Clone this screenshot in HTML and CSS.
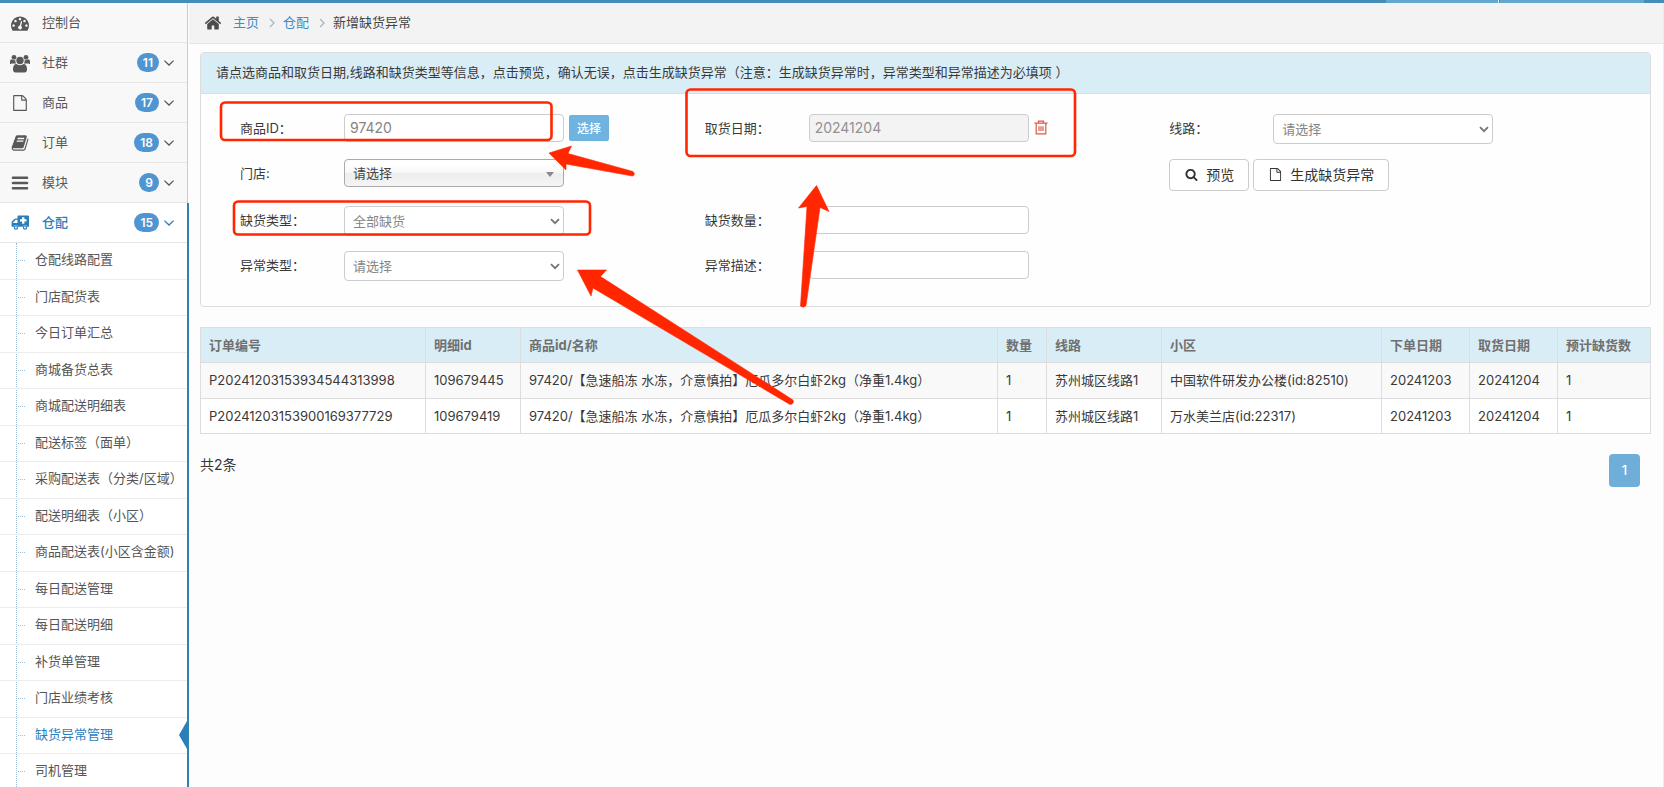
FILE: index.html
```html
<!DOCTYPE html>
<html lang="zh-CN">
<head>
<meta charset="utf-8">
<title>新增缺货异常</title>
<link rel="stylesheet" href="styles.css">
</head>
<body>
<svg class="sprite" aria-hidden="true">
  <symbol id="i-down" viewBox="0 0 10 6"><path d="M.4.6L5 5 9.600.6" fill="none" stroke="currentColor" stroke-width="1.300"/></symbol>
  <symbol id="i-right" viewBox="0 0 6 10"><path d="M1 1l4 4-4 4" fill="none" stroke="currentColor" stroke-width="1.4"/></symbol>
  <symbol id="i-select" viewBox="0 0 10 7"><path d="M1 1.2l4 4 4-4" fill="none" stroke="currentColor" stroke-width="1.9"/></symbol>
  <symbol id="i-file" viewBox="0 0 1792 1792"><path d="M1596 380q28 28 48 76t20 88v1152q0 40-28 68t-68 28h-1344q-40 0-68-28t-28-68v-1600q0-40 28-68t68-28h896q40 0 88 20t76 48zm-444-244v376h376q-10-29-22-41l-313-313q-12-12-41-22zm384 1528v-1024h-416q-40 0-68-28t-28-68v-416h-768v1536h1280z"/></symbol>
</svg>
<div class="app">
  <header class="topbar"><span class="topbar-item"></span><span class="topbar-item topbar-item-wide"></span></header>
  <div class="layout">
    <nav class="sidebar">
      <ul class="menu">
        <li><a class="menu-link" href="#">
          <svg class="menu-icon" viewBox="0 0 1792 1792"><path d="M384 1152q0-53-37.5-90.5t-90.5-37.5-90.5 37.5-37.5 90.5 37.5 90.5 90.5 37.5 90.5-37.5 37.5-90.5zm192-448q0-53-37.5-90.5t-90.5-37.5-90.5 37.5-37.5 90.5 37.5 90.5 90.5 37.5 90.5-37.5 37.5-90.5zm428 481l101-382q6-26-7.5-48.5t-38.5-29.5-48 6.5-30 39.5l-101 382q-60 5-107 43.5t-63 98.5q-20 77 20 146t117 89 146-20 89-117q16-60-6-117t-72-91zm660-33q0-53-37.5-90.5t-90.5-37.5-90.5 37.5-37.5 90.5 37.5 90.5 90.5 37.5 90.5-37.5 37.5-90.5zm-640-640q0-53-37.5-90.5t-90.5-37.5-90.5 37.5-37.5 90.5 37.5 90.5 90.5 37.5 90.5-37.5 37.5-90.5zm448 192q0-53-37.5-90.5t-90.5-37.5-90.5 37.5-37.5 90.5 37.5 90.5 90.5 37.5 90.5-37.5 37.5-90.5zm320 448q0 261-141 483-19 29-54 29h-1402q-35 0-54-29-141-221-141-483 0-182 71-348t191-286 286-191 348-71 348 71 286 191 191 286 71 348z"/></svg>
          <span class="menu-text">控制台</span></a></li>
        <li><a class="menu-link" href="#">
          <svg class="menu-icon" viewBox="1 0 18 18"><circle cx="4" cy="3.3" r="2.4"/><circle cx="16" cy="3.3" r="2.4"/><path d="M0 9.500V7.500Q0 5.200 2 5.200Q4 6.700 5.300 5.800Q5 8 6.200 9.500H1.500Q0 10.500 0 9.500zM20 9.500V7.500Q20 5.200 18 5.200Q16 6.700 14.700 5.800Q15 8 13.800 9.500H18.500Q20 10.500 20 9.500z"/><circle cx="10" cy="6.500" r="3.700"/><path d="M3 15.500Q3 10 6.500 10Q10 12.400 13.500 10Q17 10 17 15.500Q17 18.500 14.500 18.500H5.500Q3 18.500 3 15.500z"/></svg>
          <span class="menu-text">社群</span><span class="badge">11</span><svg class="chevron"><use href="#i-down"/></svg></a></li>
        <li><a class="menu-link" href="#">
          <svg class="menu-icon menu-icon-small"><use href="#i-file"/></svg>
          <span class="menu-text">商品</span><span class="badge">17</span><svg class="chevron"><use href="#i-down"/></svg></a></li>
        <li><a class="menu-link" href="#">
          <svg class="menu-icon" viewBox="0 0 1792 1792"><path d="M1703 478q40 57 18 129l-275 906q-19 64-76.500 107.500t-122.500 43.500h-923q-77 0-148.500-53.500t-99.500-131.500q-24-67-2-127 0-4 3-27t4-37q1-8-3-21.500t-3-19.500q2-11 8-21t16.500-23.500 16.500-23.500q23-38 45-91.500t30-91.500q3-10 .5-30t-.5-28q3-11 17-28t17-23q21-36 42-92t25-90q1-9-2.500-32t.5-28q4-13 22-30.500t22-22.500q19-26 42.500-84.500t27.500-96.500q1-8-3-25.500t-2-26.500q2-8 9-18t18-23 17-21q8-12 16.500-30.500t15-35 16-36 19.500-32 26.500-23.500 36-11.500 47.500 5.500l-1 3q38-9 51-9h761q74 0 114 56t18 130l-274 906q-36 119-71.500 153.500t-128.500 34.500h-869q-27 0-38 15-11 16-1 43 24 70 144 70h923q29 0 56-15.500t35-41.500l300-987q7-22 5-57 38 15 59 43zm-1064 2q-4 13 2 22.500t20 9.500h608q13 0 25.500-9.500t16.500-22.500l21-64q4-13-2-22.500t-20-9.500h-608q-13 0-25.500 9.500t-16.500 22.500zm-83 256q-4 13 2 22.500t20 9.500h608q13 0 25.500-9.500t16.500-22.500l21-64q4-13-2-22.500t-20-9.500h-608q-13 0-25.500 9.500t-16.500 22.500z"/></svg>
          <span class="menu-text">订单</span><span class="badge">18</span><svg class="chevron"><use href="#i-down"/></svg></a></li>
        <li><a class="menu-link" href="#">
          <svg class="menu-icon" viewBox="0 0 18 18"><path d="M2 2.500h14a1 1 0 0 1 0 2.600H2a1 1 0 0 1 0-2.600zM2 7.700h14a1 1 0 0 1 0 2.600H2a1 1 0 0 1 0-2.600zM2 12.900h14a1 1 0 0 1 0 2.600H2a1 1 0 0 1 0-2.600z"/></svg>
          <span class="menu-text">模块</span><span class="badge">9</span><svg class="chevron"><use href="#i-down"/></svg></a></li>
        <li class="menu-open"><a class="menu-link" href="#">
          <svg class="menu-icon" viewBox="0 0 18 18"><path fill-rule="evenodd" d="M7.500 1.500H17q1 0 1 1v10.200h-1.600a2.500 2.500 0 0 0-4.800 0H7.300a2.500 2.500 0 0 0-4.800 0H0.600V8.400q0-.7.500-1.200L3.400 4.900Q4 4.400 4.700 4.400H6.500V2.500q0-1 1-1zM11.100 3.200v2.100H9v2.300h2.100v2.100h2.300V7.600h2.100V5.300h-2.100V3.200zM4.700 5.800L2.100 8.400V9h4.400V5.800z"/><path fill-rule="evenodd" d="M4.900 11.300a2.200 2.200 0 1 1 0 4.400 2.200 2.200 0 0 1 0-4.400zm0 1.200a1 1 0 1 0 0 2 1 1 0 0 0 0-2zM14 11.300a2.200 2.200 0 1 1 0 4.400 2.200 2.200 0 0 1 0-4.400zm0 1.200a1 1 0 1 0 0 2 1 1 0 0 0 0-2z"/></svg>
          <span class="menu-text">仓配</span><span class="badge">15</span><svg class="chevron"><use href="#i-down"/></svg></a>
          <ul class="submenu">
            <li><a href="#">仓配线路配置</a></li>
            <li><a href="#">门店配货表</a></li>
            <li><a href="#">今日订单汇总</a></li>
            <li><a href="#">商城备货总表</a></li>
            <li><a href="#">商城配送明细表</a></li>
            <li><a href="#">配送标签（面单）</a></li>
            <li><a href="#">采购配送表（分类/区域）</a></li>
            <li><a href="#">配送明细表（小区）</a></li>
            <li><a href="#">商品配送表(小区含金额)</a></li>
            <li><a href="#">每日配送管理</a></li>
            <li><a href="#">每日配送明细</a></li>
            <li><a href="#">补货单管理</a></li>
            <li><a href="#">门店业绩考核</a></li>
            <li class="current"><a href="#">缺货异常管理</a></li>
            <li><a href="#">司机管理</a></li>
          </ul>
        </li>
      </ul>
    </nav>
    <main class="main">
      <nav class="breadcrumbs">
        <svg class="home-icon" viewBox="0 0 1792 1792"><path d="M1472 992v480q0 26-19 45t-45 19h-384v-384h-256v384h-384q-26 0-45-19t-19-45v-480q0-1 .5-3t.5-3l575-474 575 474q1 2 1 6zm223-69l-62 74q-8 9-21 11h-3q-13 0-21-7l-692-577-692 577q-12 8-24 7-13-2-21-11l-62-74q-8-10-7-23.500t11-21.500l719-599q32-26 76-26t76 26l244 204v-195q0-14 9-23t23-9h192q14 0 23 9t9 23v408l219 182q10 8 11 21.500t-7 23.500z"/></svg>
        <a href="#">主页</a><svg class="crumb-sep"><use href="#i-right"/></svg><a href="#">仓配</a><svg class="crumb-sep"><use href="#i-right"/></svg><span>新增缺货异常</span>
      </nav>
      <div class="content">
        <section class="panel">
          <div class="panel-head">请点选商品和取货日期,线路和缺货类型等信息，点击预览，确认无误，点击生成缺货异常（注意：生成缺货异常时，异常类型和异常描述为必填项 ）</div>
          <form class="form">
            <div class="field"><label for="goods">商品ID：</label><input class="control" id="goods" type="text" value="97420"><button class="btn-pick" type="button">选择</button></div>
            <div class="field"><label for="date">取货日期：</label><input class="control" id="date" type="text" value="20241204" readonly><button class="btn-clear" type="button" aria-label="清除"><svg viewBox="0 0 14 15"><path d="M.5 3.200h13M4.500 3V1.200h5V3M2.200 3.400V13.800h9.600V3.400M5 6.200v4.800M7 6.200v4.800M9 6.200v4.800" fill="none" stroke="currentColor" stroke-width="1.200"/></svg></button></div>
            <div class="field"><label for="line">线路：</label><span class="select"><select class="control" id="line"><option>请选择</option></select><svg class="select-arrow"><use href="#i-select"/></svg></span></div>
            <div class="field"><label for="shop">门店:</label><span class="select"><select class="control chosen" id="shop"><option>请选择</option></select><svg class="chosen-arrow" viewBox="0 0 8 5"><path d="M0 0h8L4 5z"/></svg></span></div>
            <div class="field"></div>
            <div class="actions">
              <button class="btn" type="button"><svg viewBox="0 0 1792 1792"><path d="M1216 832q0-185-131.500-316.500t-316.500-131.500-316.500 131.500-131.500 316.500 131.500 316.500 316.500 131.500 316.500-131.500 131.500-316.500zm512 832q0 52-38 90t-90 38q-54 0-90-38l-343-342q-179 124-399 124-143 0-273.500-55.500t-225-150-150-225-55.500-273.500 55.500-273.500 150-225 225-150 273.500-55.500 273.500 55.500 225 150 150 225 55.500 273.500q0 220-124 399l343 343q37 37 37 90z"/></svg>预览</button>
              <button class="btn" type="button"><svg><use href="#i-file"/></svg>生成缺货异常</button>
            </div>
            <div class="field"><label for="kind">缺货类型：</label><span class="select"><select class="control" id="kind"><option>全部缺货</option></select><svg class="select-arrow"><use href="#i-select"/></svg></span></div>
            <div class="field"><label for="count">缺货数量：</label><input class="control" id="count" type="text"></div>
            <div class="field"></div>
            <div class="field"><label for="fault">异常类型：</label><span class="select"><select class="control" id="fault"><option>请选择</option></select><svg class="select-arrow"><use href="#i-select"/></svg></span></div>
            <div class="field"><label for="note">异常描述：</label><input class="control" id="note" type="text"></div>
          </form>
        </section>
        <table class="grid">
          <colgroup><col class="c-order"><col class="c-detail"><col><col class="c-qty"><col class="c-line"><col class="c-area"><col class="c-date"><col class="c-date"><col class="c-lack"></colgroup>
          <thead><tr><th>订单编号</th><th>明细id</th><th>商品id/名称</th><th>数量</th><th>线路</th><th>小区</th><th>下单日期</th><th>取货日期</th><th>预计缺货数</th></tr></thead>
          <tbody>
            <tr><td>P20241203153934544313998</td><td>109679445</td><td>97420/【急速船冻 水冻，介意慎拍】厄瓜多尔白虾2kg（净重1.4kg）</td><td>1</td><td>苏州城区线路1</td><td>中国软件研发办公楼(id:82510)</td><td>20241203</td><td>20241204</td><td>1</td></tr>
            <tr><td>P20241203153900169377729</td><td>109679419</td><td>97420/【急速船冻 水冻，介意慎拍】厄瓜多尔白虾2kg（净重1.4kg）</td><td>1</td><td>苏州城区线路1</td><td>万水美兰店(id:22317)</td><td>20241203</td><td>20241204</td><td>1</td></tr>
          </tbody>
        </table>
        <div class="footer"><span class="total">共2条</span><a class="page" href="#">1</a></div>
      </div>
    </main>
  </div>
  <svg class="marks" width="1100" height="420" viewBox="0 0 1100 420" aria-hidden="true">
    <g fill="none" stroke="#ff2600" stroke-width="2.600"><rect x="221" y="102.500" width="330.500" height="37.500" rx="4"/><rect x="234" y="201.500" width="356" height="33" rx="4"/><rect x="686.500" y="89.500" width="388.500" height="66.500" rx="4"/></g>
    <g fill="#ff2600" stroke="#ff2600" stroke-width=".6" stroke-linejoin="round"><path d="M549 153L571.500 146L568 153.500L633 171.500Q636 174.500 632.500 176L566 164L566 170z"/><path d="M816.500 185.500L829 211.500L820 207.500L806 305.500Q803.500 308.500 800.500 306L807 206.500L798.500 208z"/><path d="M577.500 270L606.500 270L600.500 276.500L793 400Q794.500 404 790 404.500L593 288L591 296z"/></g>
  </svg>
</div>
</body>
</html>
```
FILE: styles.css
```css
* { box-sizing: border-box; }
body {
  margin: 0;
  background: #fdfdfd;
  color: #393939;
  font-family: Inter, "Noto Sans CJK SC", sans-serif;
  font-size: 13px;
  line-height: 1.5;
}
a { color: #428bca; text-decoration: none; }
ul { list-style: none; margin: 0; padding: 0; }
svg { display: block; flex: none; fill: currentColor; }
input, select, button { font-family: inherit; margin: 0; }
.sprite { position: absolute; width: 0; height: 0; }

.app { position: relative; display: flex; flex-direction: column; height: 100vh; overflow: hidden; }
.topbar { flex: none; display: flex; justify-content: flex-end; gap: 1px; height: 3px; padding-right: 20px; background: #438eb9; }
.topbar-item { width: 113px; background: #62a8d1; border-right: 1px solid #e1eef6; }
.topbar-item-wide { width: 144px; border-right: 0; }
.layout { flex: 1; display: flex; min-height: 0; }

.sidebar { flex: none; width: 188px; border-right: 1px solid #ccc; background: #f8f8f8; }
.menu-link { display: flex; align-items: center; height: 40px; padding: 0 13px 0 11px; border-bottom: 1px solid #e5e5e5; color: #585858; }
.menu-icon { width: 18px; height: 18px; margin-right: 13px; overflow: visible; }
.menu-icon-small { height: 16px; }
.menu-text { flex: 1; }
.badge { min-width: 19px; padding: 0 6px; border-radius: 10px; background: #4f95d2; color: #fff; font-size: 12px; font-weight: 600; line-height: 19px; text-align: center; }
.chevron { width: 10px; height: 6px; margin-left: 5px; overflow: visible; }
.menu-open { margin-right: -2px; border-right: 2px solid #3182ac; background: #fff; }
.menu-open > .menu-link { color: #2b7dbc; }
.menu-open .menu-text { font-weight: 500; }
.submenu { position: relative; background: #fff; }
.submenu::before { content: ""; position: absolute; top: 0; bottom: 0; left: 16px; border-left: 1px dotted #9dbdd6; }
.submenu li { position: relative; border-bottom: 1px solid #ececec; }
.submenu li::before { content: ""; position: absolute; left: 18px; top: 17px; width: 7px; border-top: 1px dotted #9dbdd6; }
.submenu a { display: block; padding: 7px 0 9px 35px; color: #555; white-space: nowrap; }
.submenu .current a { color: #2b7dbc; }
.submenu .current::after { content: ""; position: absolute; right: 0; top: 3px; border: solid transparent; border-width: 14px 8px 14px 0; border-right-color: #2b7dbc; }

.main { flex: 1; min-width: 0; margin-left: 1px; border-right: 1px solid #ececec; }
.breadcrumbs { display: flex; align-items: center; height: 41px; padding: 0 16px 0 15px; border-bottom: 1px solid #e5e5e5; background: #f3f3f3; color: #444; }
.home-icon { width: 18px; height: 18px; margin-right: 11px; color: #4c4c4c; }
.crumb-sep { width: 6px; height: 10px; margin: 0 8px 0 10px; color: #b2b6bf; }
.content { padding: 8px 12px 0 11px; }

.panel { border: 1px solid #ddd; border-radius: 4px; background: #fefefe; }
.panel-head { padding: 10px 15px; border-bottom: 1px solid #d5dfe4; background: #d9edf7; }
.form { display: grid; grid-template-columns: repeat(3, 1fr); gap: 15px 0; padding: 20px 16px 25px 39px; }
.field { display: flex; align-items: flex-start; min-height: 30px; }
.field label { flex: none; width: 104px; line-height: 28px; }
.control { width: 220px; height: 28px; padding: 0 5px; border: 1px solid #ccc; border-radius: 4px; background: #fff; color: #858585; font-size: 14px; }
.control[readonly] { background: #f3f3f3; color: #939192; }
.select { position: relative; }
select.control { appearance: none; display: block; height: 30px; padding: 0 24px 0 8px; font-size: 13px; }
.select-arrow { position: absolute; right: 4px; top: 12px; width: 10px; height: 7px; color: #777; pointer-events: none; }
select.chosen { height: 28px; border-color: #aaa; background: linear-gradient(#fff 20%, #f6f6f6 50%, #eee 52%, #f4f4f4 100%); color: #444; }
.chosen-arrow { position: absolute; right: 10px; top: 13px; width: 8px; height: 5px; color: #888; pointer-events: none; }
.btn-pick { width: 40px; height: 26px; margin: 1px 0 0 5px; padding: 0; border: 0; border-radius: 2px; background: #6fb3e0; color: #fff; font-size: 12px; font-weight: 500; }
.btn-clear { margin: 6px 0 0 5px; padding: 0; border: 0; background: none; color: #dd5a43; }
.btn-clear svg { width: 14px; height: 15px; }
.actions { display: flex; gap: 4px; }
.btn { display: flex; align-items: center; height: 32px; padding: 0 14px 1px 15px; border: 1px solid #ccc; border-radius: 4px; background: #fff; color: #333; font-size: 14px; }
.btn svg { width: 13px; height: 13px; margin-right: 8px; }

.grid { width: 100%; margin-top: 20px; border-collapse: collapse; table-layout: fixed; }
.grid th, .grid td { padding: 8px 8px 7px; border: 1px solid #ddd; text-align: left; white-space: nowrap; }
.grid th { background: #d9edf7; color: #707070; font-weight: 700; }
.grid tbody tr:nth-child(odd) { background: #f9f9f9; }
.grid tbody tr:nth-child(even) { background: #fff; }
.c-order { width: 225px; }
.c-detail { width: 95px; }
.c-qty { width: 49px; }
.c-line { width: 115px; }
.c-area { width: 220px; }
.c-date { width: 88px; }
.c-lack { width: 93px; }
.footer { display: flex; justify-content: space-between; align-items: flex-start; padding: 20px 11px 0 0; }
.total { font-size: 14px; }
.page { width: 31px; border-radius: 4px; background: #6faed9; color: #fff; font-weight: 500; line-height: 33px; text-align: center; }

.marks { position: absolute; left: 0; top: 0; pointer-events: none; }
```
